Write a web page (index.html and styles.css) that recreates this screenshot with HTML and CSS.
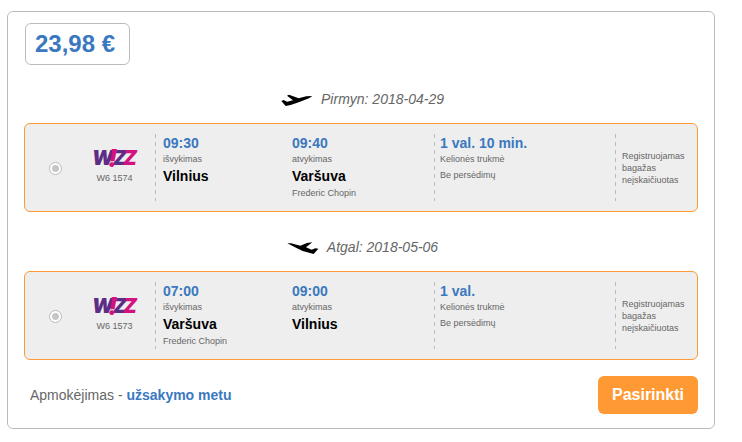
FILE: index.html
```
<!doctype html>
<html lang="lt">
<head>
<meta charset="utf-8">
<title>Skrydžio pasiūlymas</title>
<link rel="stylesheet" href="styles.css">
</head>

<body>
	<!-- wizz logo, used in both legs -->
	<svg class="defs" aria-hidden="true">
		<symbol id="wizz" viewBox="0 0 46 22">
			<g class="wizz">
				<text class="purple" x="0" y="18">W</text>
				<text class="purple" x="21" y="18">Z</text>
				<text class="pink" x="31" y="18">Z</text>
				<text class="pink mark" x="16" y="20">!</text>
			</g>
		</symbol>
	</svg>

	<form class="offer">
		<div class="price">23,98 €</div>

		<section class="trip">
			<h2 class="direction">
				<svg class="plane" viewBox="0 0 96 39" aria-hidden="true"><path d="M94 6L76 7L53 13L24 2L18 5L36 19L18 23L8 18L1 21L14 36L29 33L53 25L84 13Z"/></svg>
				Pirmyn: 2018-04-29
			</h2>
			<div class="leg">
				<div class="pick"><input type="radio" name="pirmyn" aria-label="Pirmyn W6 1574"></div>
				<div class="carrier">
					<svg class="logo" role="img" aria-label="Wizz"><use href="#wizz"/></svg>
					<div class="small">W6 1574</div>
				</div>
				<div class="stop line">
					<div class="time">09:30</div>
					<div class="small">išvykimas</div>
					<div class="city">Vilnius</div>
				</div>
				<div class="stop">
					<div class="time">09:40</div>
					<div class="small">atvykimas</div>
					<div class="city">Varšuva</div>
					<div class="small">Frederic Chopin</div>
				</div>
				<div class="info line">
					<div class="time">1 val. 10 min.</div>
					<div class="small">Kelionės trukmė</div>
					<div class="small changes">Be persėdimų</div>
				</div>
				<div class="baggage line">Registruojamas bagažas neįskaičiuotas</div>
			</div>
		</section>

		<section class="trip">
			<h2 class="direction">
				<svg class="plane" viewBox="0 0 96 39" aria-hidden="true"><path d="M1 4L12 4L40 11L60 3L76 1L57 16L74 23L85 19L94 20L80 36L47 27L30 19Z"/></svg>
				Atgal: 2018-05-06
			</h2>
			<div class="leg">
				<div class="pick"><input type="radio" name="atgal" aria-label="Atgal W6 1573"></div>
				<div class="carrier">
					<svg class="logo" role="img" aria-label="Wizz"><use href="#wizz"/></svg>
					<div class="small">W6 1573</div>
				</div>
				<div class="stop line">
					<div class="time">07:00</div>
					<div class="small">išvykimas</div>
					<div class="city">Varšuva</div>
					<div class="small">Frederic Chopin</div>
				</div>
				<div class="stop">
					<div class="time">09:00</div>
					<div class="small">atvykimas</div>
					<div class="city">Vilnius</div>
				</div>
				<div class="info line">
					<div class="time">1 val.</div>
					<div class="small">Kelionės trukmė</div>
					<div class="small changes">Be persėdimų</div>
				</div>
				<div class="baggage line">Registruojamas bagažas neįskaičiuotas</div>
			</div>
		</section>

		<div class="bottom">
			<div>Apmokėjimas - <b>užsakymo metu</b></div>
			<button class="btn" type="submit">Pasirinkti</button>
		</div>
	</form>
</body>
</html>
```
FILE: styles.css
```
*{
	box-sizing: border-box;
}
body{
	margin: 11px 27px 12px 7px;
	background: #fff;
	color: #666;
	font: 14px/20px "Liberation Sans", Arial, sans-serif;
}
.defs{
	display: none;
}
.offer{
	border: 1px solid #bbb;
	border-radius: 6px;
	padding: 11px 16px 14px;
}
.price{
	width: fit-content;
	margin-left: 1px;
	margin-bottom: 24px;
	padding: 0 14px 0 9px;
	border: 1px solid #bbb;
	border-radius: 6px;
	color: #3a78bf;
	font-size: 24px;
	font-weight: bold;
	line-height: 40px;
}
.trip + .trip{
	margin-top: 25px;
}
.direction{
	display: flex;
	justify-content: center;
	align-items: center;
	gap: 8px;
	margin: 0 0 14px;
	padding-left: 3px;
	font-size: 14px;
	font-style: italic;
	font-weight: normal;
}
.plane{
	width: 32px;
	height: 13px;
	margin-top: 2px;
	fill: #000;
}
/* radio, airline, departure, arrival, duration, baggage */
.leg{
	display: grid;
	grid-template-columns: 60px 70px 129fr 150fr 181fr 82px;
	padding: 10px 0;
	border: 1px solid #f93;
	border-radius: 6px;
	background: #eee;
}
.leg > div{
	min-height: 67px;
}
.line{
	background: repeating-linear-gradient(#bbb 0 4px, transparent 4px 8px) 0 0 / 1px 100% no-repeat;
}
.pick{
	display: flex;
	align-items: center;
	padding-top: 2px;
	padding-left: 24px;
}
.pick input{
	appearance: none;
	width: 13px;
	height: 13px;
	margin: 0;
	border: 1px solid #bbb;
	border-radius: 50%;
	background: radial-gradient(circle, #c6c6c6 3px, #fff 4px);
}
.carrier{
	display: flex;
	flex-direction: column;
	align-items: center;
	padding-top: 13px;
	padding-right: 11px;
}
.logo{
	width: 46px;
	height: 22px;
	margin-bottom: 2px;
}
.wizz{
	font: italic 900 20px Inter, "Liberation Sans", sans-serif;
}
.wizz .mark{
	font-size: 24px;
}
.purple{
	fill: #5c2d86;
}
.pink{
	fill: #d3127f;
}
.stop{
	padding-left: 8px;
}
.info{
	padding-left: 6px;
}
.time{
	color: #3a78bf;
	font-weight: bold;
	line-height: 18px;
}
.small{
	font-size: 9px;
	line-height: 14px;
}
.city{
	color: #000;
	font-weight: bold;
	line-height: 20px;
}
.changes{
	margin-top: 2px;
}
.baggage{
	display: flex;
	align-items: center;
	padding-left: 7px;
	padding-right: 8px;
	font-size: 9px;
	line-height: 12px;
}
.bottom{
	display: flex;
	justify-content: space-between;
	align-items: center;
	margin-top: 16px;
	padding-left: 6px;
}
.bottom b{
	color: #3a78bf;
}
.btn{
	padding: 9px 14px;
	border: 0;
	border-radius: 6px;
	background: #f93;
	color: #fff;
	font: bold 16px/20px "Liberation Sans", Arial, sans-serif;
	cursor: pointer;
}
```
